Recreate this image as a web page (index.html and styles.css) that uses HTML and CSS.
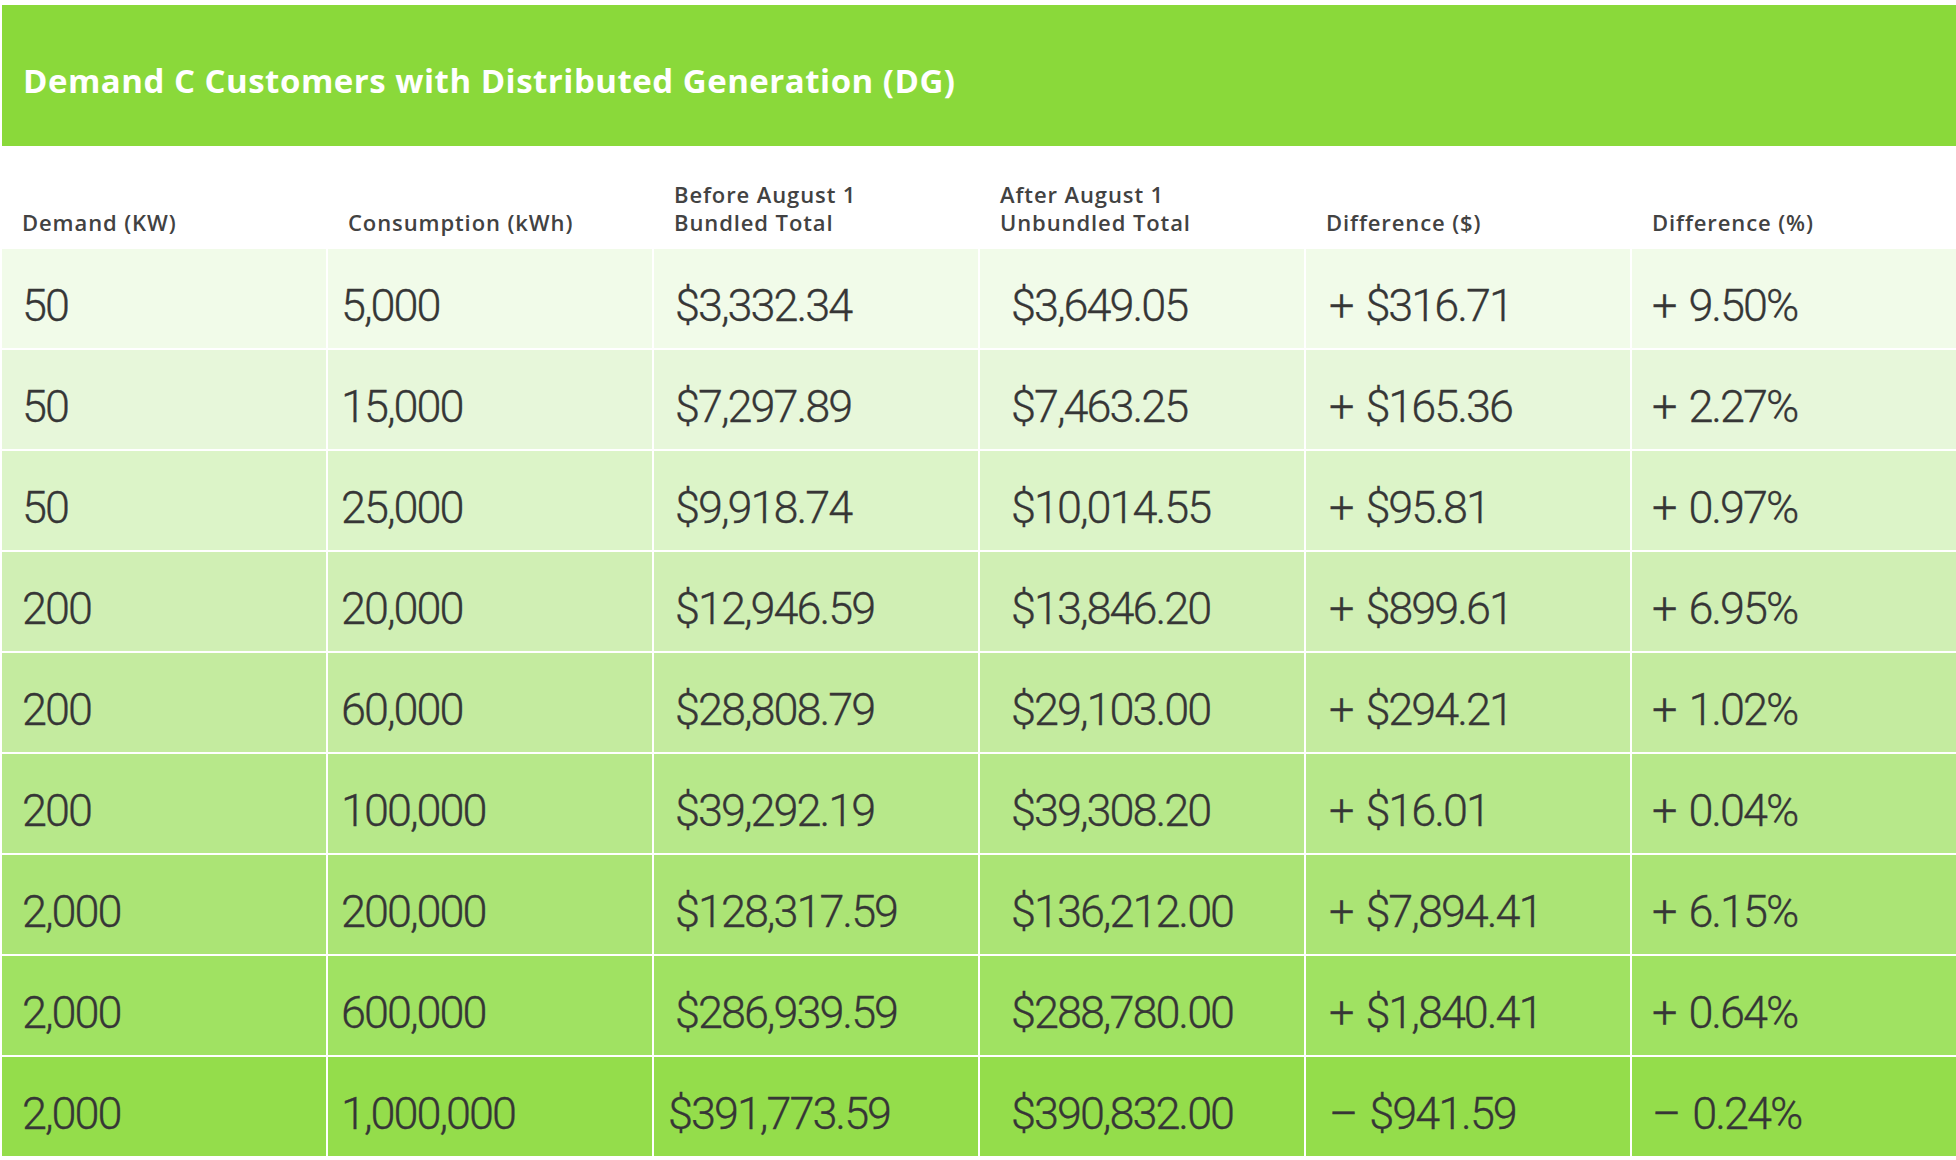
FILE: index.html
```html
<!DOCTYPE html>
<html lang="en">
<head>
<meta charset="utf-8">
<title>Demand C Customers with Distributed Generation (DG)</title>
<link rel="stylesheet" href="styles.css">
</head>
<body>
<div class="table">
  <div class="title">Demand C Customers with Distributed Generation (DG)</div>
  <div class="grid">
    <div class="th c1">Demand (KW)</div>
    <div class="th c2">Consumption (kWh)</div>
    <div class="th c3">Before August 1<br>Bundled Total</div>
    <div class="th c4">After August 1<br>Unbundled Total</div>
    <div class="th c5">Difference ($)</div>
    <div class="th c6">Difference (%)</div>

    <div class="td r1 c1">50</div><div class="td r1 c2">5,000</div><div class="td r1 c3">$3,332.34</div><div class="td r1 c4">$3,649.05</div><div class="td r1 c5">+ $316.71</div><div class="td r1 c6">+ 9.50%</div>
    <div class="td r2 c1">50</div><div class="td r2 c2">15,000</div><div class="td r2 c3">$7,297.89</div><div class="td r2 c4">$7,463.25</div><div class="td r2 c5">+ $165.36</div><div class="td r2 c6">+ 2.27%</div>
    <div class="td r3 c1">50</div><div class="td r3 c2">25,000</div><div class="td r3 c3">$9,918.74</div><div class="td r3 c4">$10,014.55</div><div class="td r3 c5">+ $95.81</div><div class="td r3 c6">+ 0.97%</div>
    <div class="td r4 c1">200</div><div class="td r4 c2">20,000</div><div class="td r4 c3">$12,946.59</div><div class="td r4 c4">$13,846.20</div><div class="td r4 c5">+ $899.61</div><div class="td r4 c6">+ 6.95%</div>
    <div class="td r5 c1">200</div><div class="td r5 c2">60,000</div><div class="td r5 c3">$28,808.79</div><div class="td r5 c4">$29,103.00</div><div class="td r5 c5">+ $294.21</div><div class="td r5 c6">+ 1.02%</div>
    <div class="td r6 c1">200</div><div class="td r6 c2">100,000</div><div class="td r6 c3">$39,292.19</div><div class="td r6 c4">$39,308.20</div><div class="td r6 c5">+ $16.01</div><div class="td r6 c6">+ 0.04%</div>
    <div class="td r7 c1">2,000</div><div class="td r7 c2">200,000</div><div class="td r7 c3">$128,317.59</div><div class="td r7 c4">$136,212.00</div><div class="td r7 c5">+ $7,894.41</div><div class="td r7 c6">+ 6.15%</div>
    <div class="td r8 c1">2,000</div><div class="td r8 c2">600,000</div><div class="td r8 c3">$286,939.59</div><div class="td r8 c4">$288,780.00</div><div class="td r8 c5">+ $1,840.41</div><div class="td r8 c6">+ 0.64%</div>
    <div class="td r9 c1">2,000</div><div class="td r9 c2">1,000,000</div><div class="td r9 c3 shift">$391,773.59</div><div class="td r9 c4">$390,832.00</div><div class="td r9 c5">&ndash; $941.59</div><div class="td r9 c6">&ndash; 0.24%</div>
  </div>
</div>
</body>
</html>
```

FILE: styles.css
```css
html, body {
  margin: 0;
  padding: 0;
  background: #ffffff;
}

body {
  padding: 5px 0 0 2px;
}

.table {
  width: 1954px;
}

.title {
  height: 141px;
  background: #8ad93a;
  color: #ffffff;
  font-family: "Open Sans", "Liberation Sans", sans-serif;
  font-weight: 700;
  font-size: 33px;
  letter-spacing: 0.5px;
  display: flex;
  align-items: center;
  padding: 10px 0 0 21px;
  box-sizing: border-box;
}

.grid {
  display: grid;
  grid-template-columns: repeat(6, 1fr);
  grid-template-rows: 101px repeat(9, 99px);
  gap: 2px;
}

.th {
  display: flex;
  align-items: flex-end;
  padding: 0 0 11px 20px;
  font-family: "Open Sans", "Liberation Sans", sans-serif;
  font-weight: 600;
  font-size: 22px;
  line-height: 28px;
  letter-spacing: 0.9px;
  color: #424242;
  background: #ffffff;
}

.td {
  display: flex;
  align-items: center;
  padding-top: 14px;
  box-sizing: border-box;
  font-family: Roboto, "Liberation Sans", sans-serif;
  font-weight: 300;
  font-size: 45px;
  letter-spacing: -2px;
  word-spacing: 4px;
  color: #363636;
  -webkit-text-stroke: 0.3px #363636;
}

.td.c1 { padding-left: 20px; }
.td.c2 { padding-left: 13px; }
.td.c3 { padding-left: 21px; }
.td.c4 { padding-left: 31px; }
.td.c5 { padding-left: 23px; }
.td.c6 { padding-left: 20px; }
.td.shift { padding-left: 14px; }

.r1 { background: #f1fbe9; }
.r2 { background: #e7f7da; }
.r3 { background: #dcf4c8; }
.r4 { background: #d0efb4; }
.r5 { background: #c4eb9f; }
.r6 { background: #b7e88a; }
.r7 { background: #abe475; }
.r8 { background: #a0e262; }
.r9 { background: #94dd4b; }
```
